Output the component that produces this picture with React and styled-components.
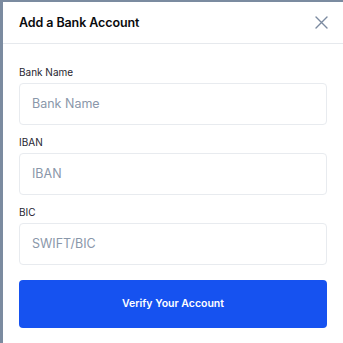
import React from "react";
import styled, { createGlobalStyle } from "styled-components";

const GlobalStyle = createGlobalStyle`
	html, body {
		margin: 0;
		padding: 0;
		background: #7b8ba0;
		overflow: hidden;
	}
	* {
		box-sizing: border-box;
	}
`;

const Modal = styled.div`
	margin: 2px 0 0 3px;
	width: 340px;
	min-height: 341px;
	background: #ffffff;
	font-family: Inter, "Liberation Sans", sans-serif;
	color: #0a0b0d;
`;

const Header = styled.div`
	height: 42px;
	padding: 0 14px 0 16px;
	display: flex;
	align-items: center;
	justify-content: space-between;
	border-bottom: 1px solid #e6e9ed;
`;

const Title = styled.h2`
	margin: 0;
	font-size: 12.5px;
	font-weight: 600;
	letter-spacing: -0.1px;
`;

const CloseButton = styled.button`
	border: 0;
	background: none;
	padding: 0;
	width: 16px;
	height: 16px;
	display: flex;
	align-items: center;
	justify-content: center;
	cursor: pointer;
`;

const Form = styled.form`
	padding: 21px 16px 16px;
	display: flex;
	flex-direction: column;
`;

const Field = styled.div`
	display: flex;
	flex-direction: column;
	gap: 4px;
	margin-bottom: 10.5px;
`;

const Label = styled.label`
	font-size: 10px;
	line-height: 14px;
	color: #1f2530;
`;

const Input = styled.input`
	height: 41.5px;
	width: 100%;
	border: 1px solid #e8ebef;
	border-radius: 4px;
	padding: 0 12px;
	font-family: inherit;
	font-size: 12.5px;
	color: #0a0b0d;
	outline: none;
	&::placeholder {
		color: #8a97aa;
	}
`;

const Submit = styled.button`
	margin-top: 4.5px;
	height: 48px;
	width: 100%;
	border: 0;
	border-radius: 4px;
	background: #1652f0;
	color: #ffffff;
	font-family: inherit;
	font-size: 10.5px;
	font-weight: 600;
	cursor: pointer;
`;

const fields = [
	{ id: "bank", label: "Bank Name", placeholder: "Bank Name" },
	{ id: "iban", label: "IBAN", placeholder: "IBAN" },
	{ id: "bic", label: "BIC", placeholder: "SWIFT/BIC" },
];

export default function App() {
	return (
		<>
			<GlobalStyle />
			<Modal>
				<Header>
					<Title>Add a Bank Account</Title>
					<CloseButton aria-label="Close">
						<svg width="13" height="13" viewBox="0 0 13 13">
							<path d="M1 1L12 12M12 1L1 12" stroke="#7b8aa0" strokeWidth="1.4" strokeLinecap="round" />
						</svg>
					</CloseButton>
				</Header>
				<Form onSubmit={(e) => e.preventDefault()}>
					{fields.map((f) => (
						<Field key={f.id}>
							<Label htmlFor={f.id}>{f.label}</Label>
							<Input id={f.id} placeholder={f.placeholder} />
						</Field>
					))}
					<Submit type="submit">Verify Your Account</Submit>
				</Form>
			</Modal>
		</>
	);
}
